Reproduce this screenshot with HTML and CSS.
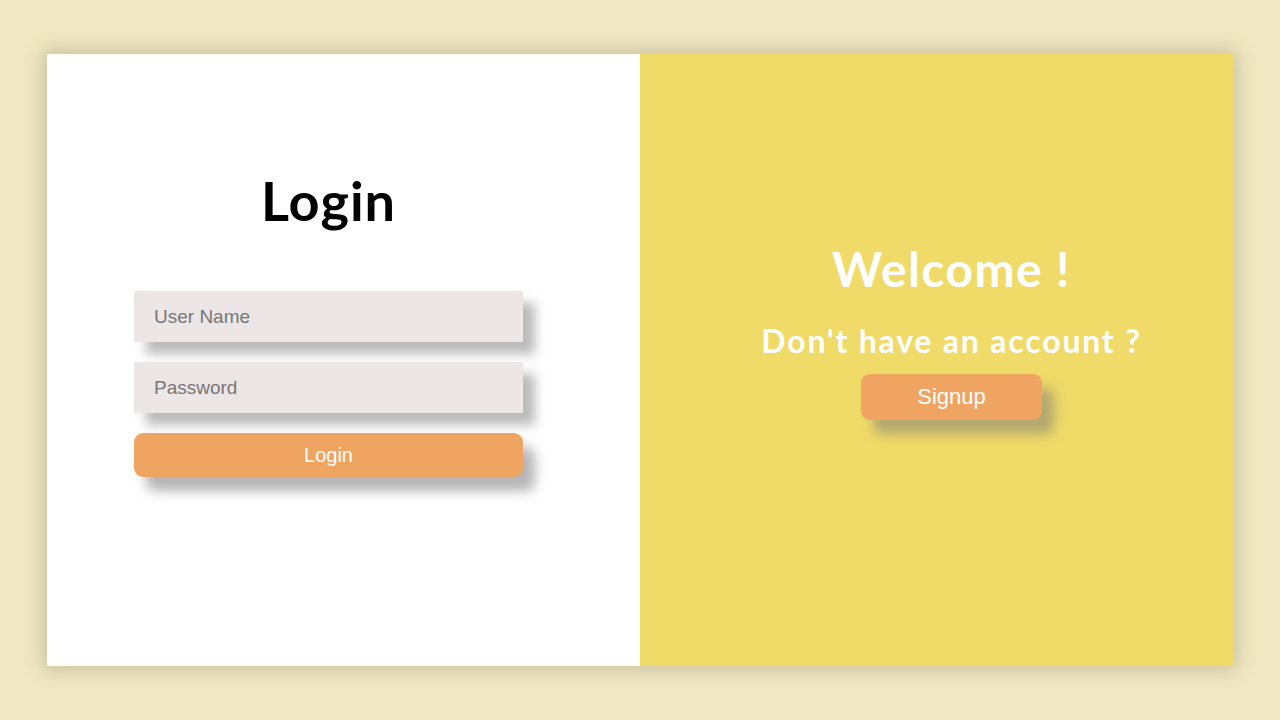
FILE: index.html
```html
<!DOCTYPE html>
<html lang="en">
<head>
<meta charset="utf-8">
<title>Login</title>
<link rel="stylesheet" href="styles.css">
</head>
<body>
<div class="card">
  <section class="panel panel-login">
    <h1 class="title">Login</h1>
    <form class="form">
      <input class="field" type="text" placeholder="User Name">
      <input class="field" type="password" placeholder="Password">
      <button class="btn btn-login" type="button">Login</button>
    </form>
  </section>
  <section class="panel panel-welcome">
    <h2 class="welcome">Welcome !</h2>
    <h3 class="question">Don't have an account ?</h3>
    <button class="btn btn-signup" type="button">Signup</button>
  </section>
</div>
</body>
</html>
```

FILE: styles.css
```css
* { box-sizing: border-box; }
html, body { margin: 0; height: 100%; }
body {
  background: #f1e9c3;
  padding: 54px 47px;
  font-family: "Lato", "Noto Sans", sans-serif;
}
.card {
  display: flex;
  width: 1186px;
  height: 612px;
  box-shadow: 0 0 18px 4px rgba(150, 140, 110, 0.45);
}
.panel {
  flex: 1;
  display: flex;
  flex-direction: column;
  align-items: center;
}
.panel-login {
  background: #ffffff;
  padding: 113px 30px 0 0;
}
.panel-welcome {
  background: #f0da68;
  padding: 185px 0 0 30px;
}
.title {
  margin: 0;
  font-size: 54px;
  font-weight: 700;
  line-height: 68px;
  letter-spacing: 1px;
  color: #000;
}
.form {
  margin-top: 56px;
  display: flex;
  flex-direction: column;
  gap: 20px;
  width: 389px;
}
.field {
  height: 51px;
  border: none;
  outline: none;
  background: #ece6e6;
  padding: 0 20px;
  font-family: "Liberation Sans", Arial, sans-serif;
  font-size: 19px;
  color: #333;
  box-shadow: 12px 12px 10px rgba(120, 120, 120, 0.5);
}
.field::placeholder { color: #777; }
.btn {
  border: none;
  background: #f0a462;
  color: #fff;
  font-family: "Liberation Sans", Arial, sans-serif;
  font-size: 20px;
  border-radius: 9px;
  cursor: pointer;
}
.btn-login {
  height: 44px;
  box-shadow: 12px 14px 12px rgba(120, 120, 120, 0.55);
}
.welcome {
  margin: 0;
  font-size: 48px;
  font-weight: 700;
  line-height: 60px;
  letter-spacing: 1.4px;
  color: #fff;
}
.question {
  margin: 22px 0 0;
  font-size: 32px;
  font-weight: 700;
  line-height: 40px;
  letter-spacing: 1.8px;
  color: #fff;
}
.btn-signup {
  margin-top: 13px;
  width: 181px;
  height: 46px;
  font-size: 22px;
  box-shadow: 12px 14px 12px rgba(120, 120, 120, 0.5);
}
```
